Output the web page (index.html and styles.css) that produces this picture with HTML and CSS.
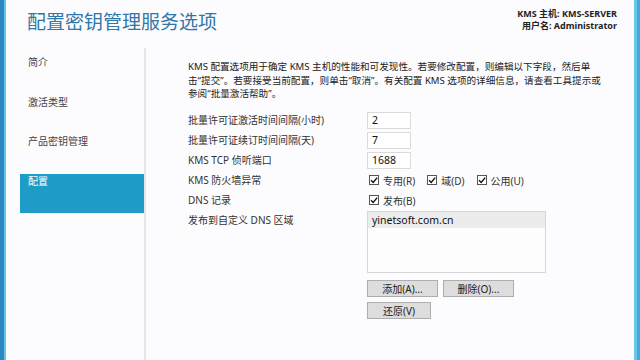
FILE: index.html
```html
<!DOCTYPE html>
<html lang="zh-CN">
<head>
    <meta charset="UTF-8">
    <meta name="viewport" content="width=device-width, initial-scale=1.0">
    <title>配置密钥管理服务选项</title>
    <link rel="stylesheet" href="styles.css">
</head>
<body>
    <div class="window">
        <div class="top">
            <div class="title">配置密钥管理服务选项</div>
            <div class="host">
                <div>KMS 主机: KMS-SERVER</div>
                <div>用户名: Administrator</div>
            </div>
        </div>
        <div class="main">
            <div class="nav">
                <div class="nav-item">简介</div>
                <div class="nav-item">激活类型</div>
                <div class="nav-item">产品密钥管理</div>
                <div class="nav-item active">配置</div>
            </div>
            <div class="content">
                <p class="intro">KMS 配置选项用于确定 KMS 主机的性能和可发现性。若要修改配置，则编辑以下字段，然后单<br>击“提交”。若要接受当前配置，则单击“取消”。有关配置 KMS 选项的详细信息，请查看工具提示或<br>参阅“批量激活帮助”。</p>
                <div class="form">
                    <div class="label">批量许可证激活时间间隔(小时)</div>
                    <div class="field"><div class="input">2</div></div>

                    <div class="label">批量许可证续订时间间隔(天)</div>
                    <div class="field"><div class="input">7</div></div>

                    <div class="label">KMS TCP 侦听端口</div>
                    <div class="field"><div class="input">1688</div></div>

                    <div class="label">KMS 防火墙异常</div>
                    <div class="field checks">
                        <span class="check"><span class="box"><svg viewBox="0 0 10 10" width="10" height="10"><path d="M2 5.2 L4.2 7.4 L8.2 2.6" fill="none" stroke="#111" stroke-width="1.4"/></svg></span>专用(R)</span>
                        <span class="check"><span class="box"><svg viewBox="0 0 10 10" width="10" height="10"><path d="M2 5.2 L4.2 7.4 L8.2 2.6" fill="none" stroke="#111" stroke-width="1.4"/></svg></span>域(D)</span>
                        <span class="check"><span class="box"><svg viewBox="0 0 10 10" width="10" height="10"><path d="M2 5.2 L4.2 7.4 L8.2 2.6" fill="none" stroke="#111" stroke-width="1.4"/></svg></span>公用(U)</span>
                    </div>

                    <div class="label">DNS 记录</div>
                    <div class="field checks">
                        <span class="check"><span class="box"><svg viewBox="0 0 10 10" width="10" height="10"><path d="M2 5.2 L4.2 7.4 L8.2 2.6" fill="none" stroke="#111" stroke-width="1.4"/></svg></span>发布(B)</span>
                    </div>

                    <div class="label">发布到自定义 DNS 区域</div>
                    <div class="field zone">
                        <div class="list">
                            <div class="list-item">yinetsoft.com.cn</div>
                        </div>
                        <div class="buttons">
                            <button class="btn">添加(A)...</button>
                            <button class="btn">删除(O)...</button>
                        </div>
                        <div class="buttons">
                            <button class="btn small">还原(V)</button>
                        </div>
                    </div>
                </div>
            </div>
        </div>
    </div>
</body>
</html>
```
FILE: styles.css
```css
body {
    margin: 0;
    padding: 0;
    background: #fcfbfd;
    font-family: "Noto Sans", "Noto Sans CJK SC", sans-serif;
    font-size: 10px;
    color: #333;
}
.window {
    height: 360px;
    box-sizing: border-box;
    border-left: 4px solid #2d88bf;
    border-right: 3px solid #43a9d8;
    box-shadow: inset 2px 0 0 #62c4ec, inset -3px 0 0 #66c8ee;
    display: flex;
    flex-direction: column;
    overflow: hidden;
}
.top {
    height: 48px;
    display: flex;
    justify-content: space-between;
    align-items: flex-start;
    flex-shrink: 0;
}
.title {
    padding: 9px 0 0 23px;
    font-family: "Noto Sans CJK SC", sans-serif;
    font-size: 19px;
    line-height: 24px;
    color: #2f77a8;
}
.host {
    padding: 8px 20px 0 0;
    text-align: right;
    font-weight: bold;
    font-size: 9px;
    line-height: 12px;
    color: #222;
}
.main {
    flex: 1;
    display: flex;
}
.nav {
    width: 142px;
    border-right: 2px solid #e6e6e6;
    padding: 7px 0 0 16px;
    box-sizing: border-box;
}
.nav-item {
    height: 39.5px;
    padding: 0 8px;
    line-height: 14px;
    color: #444;
}
.nav-item.active {
    background: #1e9bc6;
    color: white;
}
.content {
    flex: 1;
    padding-left: 42px;
}
.intro {
    margin: 12px 0 0 0;
    font-size: 9.6px;
    line-height: 13.5px;
    white-space: nowrap;
    color: #222;
}
.form {
    margin-top: 9.5px;
    display: grid;
    grid-template-columns: 179px auto;
    grid-auto-rows: minmax(20px, auto);
}
.label {
    line-height: 20px;
    color: #333;
}
.field {
    display: flex;
    align-items: center;
    height: 20px;
}
.input {
    width: 44px;
    height: 17px;
    box-sizing: border-box;
    border: 1px solid #dadada;
    background: white;
    padding-left: 4px;
    line-height: 15px;
    font-size: 10.5px;
    color: #111;
}
.checks {
    gap: 12px;
    padding-left: 2px;
}
.check {
    display: flex;
    align-items: center;
    gap: 4px;
}
.box {
    width: 10px;
    height: 10px;
    box-sizing: border-box;
    border: 1px solid #555;
    background: white;
    display: flex;
}
.box svg {
    margin: -1px;
}
.zone {
    height: auto;
    flex-direction: column;
    align-items: flex-start;
    padding-top: 1px;
}
.list {
    width: 179px;
    height: 62px;
    box-sizing: border-box;
    border: 1px solid #d6d6d6;
    background: #fdfdfd;
}
.list-item {
    background: #ececec;
    height: 16px;
    line-height: 16px;
    padding-left: 4px;
    font-size: 10.5px;
    color: #111;
}
.buttons {
    display: flex;
    gap: 5px;
    margin-top: 7px;
}
.btn {
    width: 71px;
    height: 17px;
    padding: 0;
    border: 1px solid #adadad;
    background: #dddddd;
    font-family: "Noto Sans", "Noto Sans CJK SC", sans-serif;
    font-size: 10px;
    color: #222;
}
.btn.small {
    width: 64px;
}
.buttons + .buttons {
    margin-top: 5px;
}
```
